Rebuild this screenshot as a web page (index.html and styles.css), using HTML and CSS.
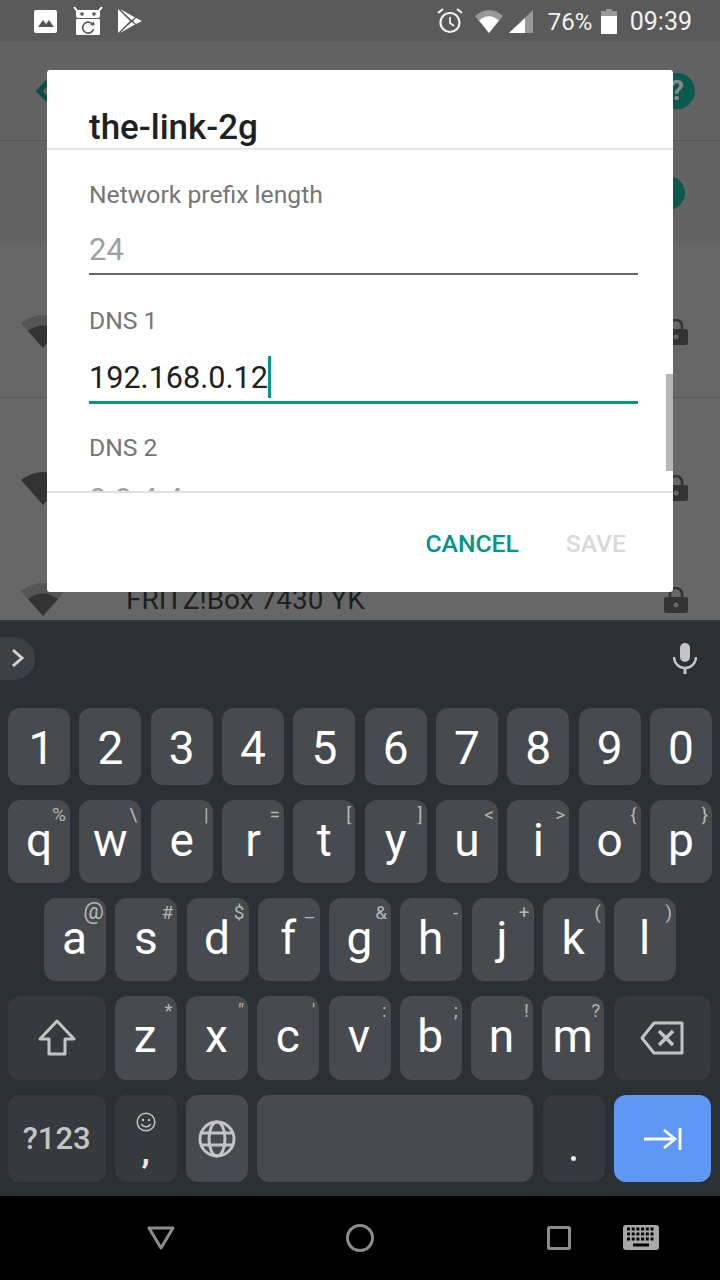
FILE: index.html
```html
<!DOCTYPE html>
<html lang="en">
<head>
    <meta charset="UTF-8">
    <meta name="viewport" content="width=device-width, initial-scale=1.0">
    <title>the-link-2g</title>
    <link rel="stylesheet" href="styles.css">
</head>
<body>
    <section class="screen">
        <header class="statusbar">
            <svg class="st-photo" viewBox="0 0 23 23"><rect width="23" height="23" rx="2" fill="#fff"/><path d="M4 17 L9 10 L12 14 L15 10 L20 17Z" fill="#555"/></svg>
            <svg class="st-fdroid" viewBox="0 0 30 28"><path d="M1 0 L5 5 M29 0 L25 5" stroke="#fff" stroke-width="2"/><rect x="3" y="3" width="24" height="8" rx="2" fill="#fff"/><rect x="3" y="12" width="24" height="16" rx="1" fill="#fff"/><circle cx="9" cy="7" r="1.8" fill="#555"/><circle cx="21" cy="7" r="1.8" fill="#555"/><path d="M20 18 A5.5 5.5 0 1 0 20.5 22" fill="none" stroke="#555" stroke-width="1.6"/><path d="M17 18 L21.5 18.5 L21 14.5Z" fill="#555"/></svg>
            <svg class="st-play" viewBox="0 0 24 24"><path d="M0 0 L12 12 L0 24Z M2 0 L17 8.500 L13.500 11Z M2 24 L17 15.500 L13.500 13Z M18 9 L24 12 L18 15 L15 12Z" fill="#fff"/></svg>
            <div class="st-right">
                <svg class="st-alarm" viewBox="0 0 26 26"><circle cx="13" cy="14.500" r="9.500" fill="none" stroke="#f2f2f2" stroke-width="2.200"/><path d="M13 9 V15 L17 18" fill="none" stroke="#f2f2f2" stroke-width="1.800"/><path d="M1 5 L6 1 M25 5 L20 1" stroke="#f2f2f2" stroke-width="2.200"/></svg>
                <svg class="st-wifi" viewBox="0 0 28 24"><path d="M0 7 Q14 -5 28 7 L14 24Z" fill="#999"/><path d="M4 11.500 Q14 3 24 11.500 L14 24Z" fill="#fff"/></svg>
                <svg class="st-signal" viewBox="0 0 24 23"><path d="M24 0 V23 H0Z" fill="#999"/><path d="M16 8 V23 H0Z" fill="#fff"/></svg>
                <span class="st-pct">76%</span>
                <svg class="st-batt" viewBox="0 0 16 25"><path d="M5 0 H11 V2 H16 V25 H0 V2 H5Z" fill="#fff"/><path d="M5 0 H11 V2 H16 V7 H0 V2 H5Z" fill="#999"/></svg>
                <span class="st-time">09:39</span>
            </div>
        </header>

        <div class="appbar">
            <svg class="back" viewBox="0 0 14 28"><path d="M14 3 L3 14 L14 25" fill="none" stroke="#0b5046" stroke-width="5"/></svg>
            <div class="help">?</div>
        </div>
        <div class="toggle-row"><div class="toggle"></div></div>

        <div class="net net-first">
            <svg class="wedge" viewBox="0 0 44 33"><path d="M0 8 Q22 -8 44 8 L22 33Z" fill="#555"/><path d="M7 16 Q22 5 37 16 L22 33Z" fill="#333"/></svg>
            <span class="net-name"></span>
            <svg class="lock" viewBox="0 0 24 26"><path d="M6 11 V7 A6 6 0 0 1 18 7 V11" fill="none" stroke="#333" stroke-width="2.500"/><rect y="10" width="24" height="16" rx="2" fill="#333"/><circle cx="12" cy="18" r="2.500" fill="#666"/></svg>
        </div>
        <div class="net net-second">
            <svg class="wedge" viewBox="0 0 44 33"><path d="M0 8 Q22 -8 44 8 L22 33Z" fill="#333"/></svg>
            <span class="net-name"></span>
            <svg class="lock" viewBox="0 0 24 26"><path d="M6 11 V7 A6 6 0 0 1 18 7 V11" fill="none" stroke="#333" stroke-width="2.500"/><rect y="10" width="24" height="16" rx="2" fill="#333"/><circle cx="12" cy="18" r="2.500" fill="#666"/></svg>
        </div>
        <div class="net net-third">
            <svg class="wedge" viewBox="0 0 44 33"><path d="M0 8 Q22 -8 44 8 L22 33Z" fill="#555"/><path d="M7 16 Q22 5 37 16 L22 33Z" fill="#333"/></svg>
            <span class="net-name">FRITZ!Box 7430 YK</span>
            <svg class="lock" viewBox="0 0 24 26"><path d="M6 11 V7 A6 6 0 0 1 18 7 V11" fill="none" stroke="#333" stroke-width="2.500"/><rect y="10" width="24" height="16" rx="2" fill="#333"/><circle cx="12" cy="18" r="2.500" fill="#666"/></svg>
        </div>

        <div class="dialog">
            <h1 class="dlg-title"><span>the-link-2g</span></h1>
            <div class="dlg-body">
                <label class="field-label">Network prefix length</label>
                <div class="field field-off">24</div>
                <label class="field-label">DNS 1</label>
                <div class="field field-on">192.168.0.12<span class="caret"></span></div>
                <label class="field-label">DNS 2</label>
                <div class="field field-off field-last">8.8.4.4</div>
                <div class="scrollthumb"></div>
            </div>
            <div class="dlg-actions">
                <span class="btn-cancel">CANCEL</span>
                <span class="btn-save">SAVE</span>
            </div>
        </div>
    </section>

    <section class="keyboard">
        <div class="strip">
            <div class="pill"><svg viewBox="0 0 14 20"><path d="M2 2 L11 10 L2 18" fill="none" stroke="#d0d0d0" stroke-width="3"/></svg></div>
            <svg class="mic" viewBox="0 0 24 31"><rect x="7" y="0" width="10" height="19" rx="5" fill="#c4c4c4"/><path d="M1 14 A11 11 0 0 0 23 14" fill="none" stroke="#c4c4c4" stroke-width="2.500"/><rect x="10.500" y="24" width="3" height="7" fill="#c4c4c4"/></svg>
        </div>

        <div class="row row-num">
            <div class="key key-one">1</div><div class="key">2</div><div class="key">3</div><div class="key">4</div><div class="key">5</div>
            <div class="key">6</div><div class="key">7</div><div class="key">8</div><div class="key">9</div><div class="key">0</div>
        </div>
        <div class="row row-top">
            <div class="key">q<i class="hint">%</i></div>
            <div class="key">w<i class="hint">\</i></div>
            <div class="key">e<i class="hint">|</i></div>
            <div class="key">r<i class="hint">=</i></div>
            <div class="key">t<i class="hint">[</i></div>
            <div class="key">y<i class="hint">]</i></div>
            <div class="key">u<i class="hint">&lt;</i></div>
            <div class="key">i<i class="hint">&gt;</i></div>
            <div class="key">o<i class="hint">{</i></div>
            <div class="key">p<i class="hint">}</i></div>
        </div>
        <div class="row row-mid">
            <div class="key">a<i class="hint hint-at">@</i></div>
            <div class="key">s<i class="hint">#</i></div>
            <div class="key">d<i class="hint">$</i></div>
            <div class="key">f<i class="hint hint-low">–</i></div>
            <div class="key">g<i class="hint">&amp;</i></div>
            <div class="key">h<i class="hint">-</i></div>
            <div class="key">j<i class="hint">+</i></div>
            <div class="key">k<i class="hint">(</i></div>
            <div class="key">l<i class="hint">)</i></div>
        </div>
        <div class="row row-low">
            <div class="key key-wide key-dark">
                <svg class="ic-shift" viewBox="0 0 40 38"><path d="M20 2 L37 20 H28 V35 H12 V20 H3Z" fill="none" stroke="#c4c4c4" stroke-width="3" stroke-linejoin="round"/></svg>
            </div>
            <div class="key">z<i class="hint">*</i></div>
            <div class="key">x<i class="hint">"</i></div>
            <div class="key">c<i class="hint">'</i></div>
            <div class="key">v<i class="hint">:</i></div>
            <div class="key">b<i class="hint">;</i></div>
            <div class="key">n<i class="hint">!</i></div>
            <div class="key">m<i class="hint">?</i></div>
            <div class="key key-wide key-dark">
                <svg class="ic-del" viewBox="0 0 44 34"><path d="M14 2 H42 V32 H14 L2 17Z" fill="none" stroke="#c4c4c4" stroke-width="3" stroke-linejoin="round"/><path d="M19 10 L33 24 M33 10 L19 24" stroke="#c4c4c4" stroke-width="3.500"/></svg>
            </div>
        </div>
        <div class="row row-bottom">
            <div class="key key-wide key-dark key-sym">?123</div>
            <div class="key key-dark key-comma">
                <svg class="ic-emoji" viewBox="0 0 20 20"><circle cx="10" cy="10" r="8.800" fill="none" stroke="#c4c4c4" stroke-width="1.500"/><circle cx="7" cy="8" r="1.200" fill="#c4c4c4"/><circle cx="13" cy="8" r="1.200" fill="#c4c4c4"/><path d="M5.500 12 A5 5 0 0 0 14.500 12" fill="none" stroke="#c4c4c4" stroke-width="1.500"/></svg>
                <span class="comma">,</span>
            </div>
            <div class="key">
                <svg class="ic-globe" viewBox="0 0 38 38" fill="none" stroke="#c4c4c4" stroke-width="3"><circle cx="19" cy="19" r="17"/><ellipse cx="19" cy="19" rx="8" ry="17"/><path d="M4 13 H34 M4 25 H34"/></svg>
            </div>
            <div class="key key-space"></div>
            <div class="key key-dark key-period"><span class="period"></span></div>
            <div class="key key-wide key-enter">
                <svg class="ic-next" viewBox="0 0 38 22" fill="none" stroke="#fff" stroke-width="2.800"><path d="M0 11 H30 M20 2 L31 11 L20 20"/><path d="M36 0 V22"/></svg>
            </div>
        </div>
    </section>

    <nav class="navbar">
        <svg class="nav-back" viewBox="0 0 28 24"><path d="M2 2 H26 L14 22Z" fill="none" stroke="#8c8c8c" stroke-width="3" stroke-linejoin="round"/></svg>
        <svg class="nav-home" viewBox="0 0 28 28"><circle cx="14" cy="14" r="12.500" fill="none" stroke="#8c8c8c" stroke-width="3"/></svg>
        <svg class="nav-recent" viewBox="0 0 24 24"><rect x="1.500" y="1.500" width="21" height="21" fill="none" stroke="#8c8c8c" stroke-width="3" rx="1"/></svg>
        <svg class="nav-kbd" viewBox="0 0 36 26"><rect width="36" height="25" rx="3" fill="#a8a8a8"/><path d="M4 4 H32 M4 9 H32 M4 14 H32" stroke="#000" stroke-width="3" stroke-dasharray="3 1.700"/><rect x="10" y="18.500" width="16" height="3" fill="#000"/></svg>
    </nav>
</body>
</html>
```

FILE: styles.css
```css
* {
    margin: 0px;
    padding: 0px;
    box-sizing: border-box;
}

body {
    width: 720px;
    height: 1280px;
    overflow: hidden;
    display: flex;
    flex-direction: column;
    font-family: Roboto, "Liberation Sans", sans-serif;
    background-color: #000;
}

svg {
    display: block;
    flex-shrink: 0;
}

/* top half, dimmed behind the dialog */
.screen {
    position: relative;
    height: 620px;
    overflow: hidden;
    background-color: #676767;
}

.statusbar {
    height: 42px;
    display: flex;
    align-items: center;
    padding-left: 34px;
    padding-right: 28px;
    background-color: #5a5a5a;
}

.st-photo { width: 23px; height: 23px; }
.st-fdroid { width: 30px; height: 28px; margin-left: 16px; }
.st-play { width: 24px; height: 24px; margin-left: 15px; }

.st-right {
    margin-left: auto;
    display: flex;
    align-items: center;
    color: #f2f2f2;
}

.st-alarm { width: 26px; height: 26px; }
.st-wifi { width: 28px; height: 24px; margin-left: 12px; }
.st-signal { width: 24px; height: 23px; margin-left: 6px; }
.st-pct { font-size: 24px; margin-left: 15px; width: 45px; white-space: nowrap; padding-top: 1px; }
.st-batt { width: 16px; height: 25px; margin-left: 8px; }
.st-time { font-size: 25px; margin-left: 13px; }

.appbar {
    height: 99px;
    display: flex;
    align-items: center;
    justify-content: space-between;
    padding-left: 36px;
    padding-right: 25px;
    background-color: #636363;
    border-bottom: 1px solid #565656;
}

.back { width: 14px; height: 28px; }

.help {
    width: 36px;
    height: 36px;
    border-radius: 50%;
    background-color: #0b5a4f;
    color: #8a8a8a;
    font-size: 28px;
    font-weight: 700;
    text-align: center;
    line-height: 36px;
}

.toggle-row {
    height: 103px;
    display: flex;
    align-items: center;
    justify-content: flex-end;
    padding-right: 35px;
    background-color: #636363;
}

.toggle {
    width: 34px;
    height: 34px;
    border-radius: 50%;
    background-color: #0b5a4f;
}

.net {
    display: flex;
    align-items: center;
    padding-left: 21px;
    padding-right: 32px;
}

.net-first {
    height: 154px;
    padding-top: 22px;
    border-bottom: 1px solid #585858;
}

.net-second { height: 180px; }
.net-third { height: 43px; }

.wedge { width: 44px; height: 33px; }

.net-name {
    margin-left: 61px;
    font-size: 28px;
    color: #1f1f1f;
    white-space: nowrap;
}

.lock {
    width: 24px;
    height: 26px;
    margin-left: auto;
}

.dialog {
    position: absolute;
    left: 47px;
    top: 70px;
    width: 626px;
    height: 522px;
    display: flex;
    flex-direction: column;
    background-color: #fff;
    border-radius: 3px;
}

.dlg-title {
    height: 80px;
    flex-shrink: 0;
    padding-left: 42px;
    padding-top: 36px;
    font-size: 35px;
    font-weight: 500;
    line-height: 44px;
    color: #212121;
    border-bottom: 2px solid #e6e6e6;
}

.dlg-body {
    position: relative;
    height: 343px;
    flex-shrink: 0;
    overflow: hidden;
    padding-left: 42px;
    padding-right: 35px;
    padding-top: 29px;
    border-bottom: 2px solid #e0e0e0;
}

.field-label {
    display: block;
    height: 32px;
    font-size: 24.7px;
    line-height: 32px;
    color: #757575;
}

.field {
    height: 48px;
    margin-top: 16px;
    margin-bottom: 30px;
    padding-top: 3px;
    font-size: 31px;
    line-height: 40px;
    border-bottom: 2px solid #666;
}

.field-off { color: #a0a0a0; }

.field-on {
    height: 51px;
    margin-bottom: 28px;
    font-size: 30.6px;
    color: #212121;
    border-bottom: 3px solid #009688;
}

.field-last { margin-top: 13px; }

.caret {
    display: inline-block;
    width: 3px;
    height: 42px;
    vertical-align: -10px;
    background-color: #009688;
}

.scrollthumb {
    position: absolute;
    right: 0px;
    top: 224px;
    width: 7px;
    height: 97px;
    background-color: #b5b5b5;
}

.dlg-actions {
    flex-grow: 1;
    display: flex;
    align-items: center;
    justify-content: flex-end;
    padding-right: 47px;
    padding-top: 1px;
    font-size: 24.7px;
    font-weight: 500;
}

.btn-cancel { color: #009688; margin-right: 47px; }
.btn-save { color: #d9d9d9; }

/* keyboard */
.keyboard {
    height: 576px;
    display: flex;
    flex-direction: column;
    gap: 15px;
    background-color: #2b3035;
    border-top: 2px solid #363b40;
}

.strip {
    height: 71px;
    display: flex;
    align-items: center;
    justify-content: space-between;
    padding-right: 23px;
    padding-top: 1px;
}

.pill {
    width: 35px;
    height: 43px;
    display: flex;
    align-items: center;
    padding-left: 11px;
    background-color: #3b4044;
    border-radius: 0px 22px 22px 0px;
}

.pill svg { width: 14px; height: 20px; }

.mic { width: 24px; height: 31px; }

.row {
    display: flex;
    gap: 9.25px;
    padding-left: 8px;
    padding-right: 8px;
    flex-shrink: 0;
}

.row-num { height: 77px; gap: 9.33px; }
.row-top { height: 83px; gap: 9.33px; }
.row-mid { height: 83px; padding-left: 44px; }
.row-low { height: 84px; }
.row-bottom { height: 87px; }

.key {
    position: relative;
    flex: 0 0 62px;
    display: flex;
    align-items: center;
    justify-content: center;
    font-size: 46px;
    color: #fff;
    background-color: #474b4f;
    border-radius: 12px;
}

.row-num .key { padding-top: 2px; }
.row-num .key-one { padding-left: 5px; }
.row-top .key { padding-bottom: 4px; }
.row-mid .key { padding-bottom: 4px; padding-right: 1px; }
.row-low .key { padding-bottom: 4px; padding-right: 1px; }
.row-low .key-dark { padding: 0px; }

.key-wide { flex-basis: 97.5px; }
.key-space { flex-basis: 276px; }
.key-dark { background-color: #363a3e; }
.key-enter { background-color: #5e97f6; }

.key-sym {
    font-size: 31px;
    font-weight: 500;
    color: #c4c4c4;
}

.key-comma {
    flex-direction: column;
    justify-content: flex-start;
    padding-top: 17px;
}

.comma {
    font-size: 34px;
    font-weight: 700;
    line-height: 34px;
    margin-top: 2px;
    color: #e8e8e8;
}

.key-period { align-items: flex-start; padding-top: 61px; }

.period {
    width: 5px;
    height: 5px;
    border-radius: 50%;
    background-color: #e8e8e8;
}

.hint {
    position: absolute;
    top: 3px;
    right: 4px;
    font-size: 19px;
    font-style: normal;
    line-height: 24px;
    color: #b4b6b8;
}

.hint-at { font-size: 23px; right: 2px; top: 2px; }
.hint-low { top: 8px; }

.ic-shift { width: 40px; height: 38px; }
.ic-del { width: 44px; height: 34px; }
.ic-emoji { width: 20px; height: 20px; }
.ic-globe { width: 38px; height: 38px; }
.ic-next { width: 38px; height: 22px; }

/* android nav */
.navbar {
    height: 84px;
    display: flex;
    align-items: center;
    padding-left: 147px;
    padding-bottom: 0px;
    background-color: #000;
}

.nav-back { width: 28px; height: 24px; }
.nav-home { width: 28px; height: 28px; margin-left: 171px; }
.nav-recent { width: 24px; height: 24px; margin-left: 173px; }
.nav-kbd { width: 36px; height: 26px; margin-left: 52px; }
```
